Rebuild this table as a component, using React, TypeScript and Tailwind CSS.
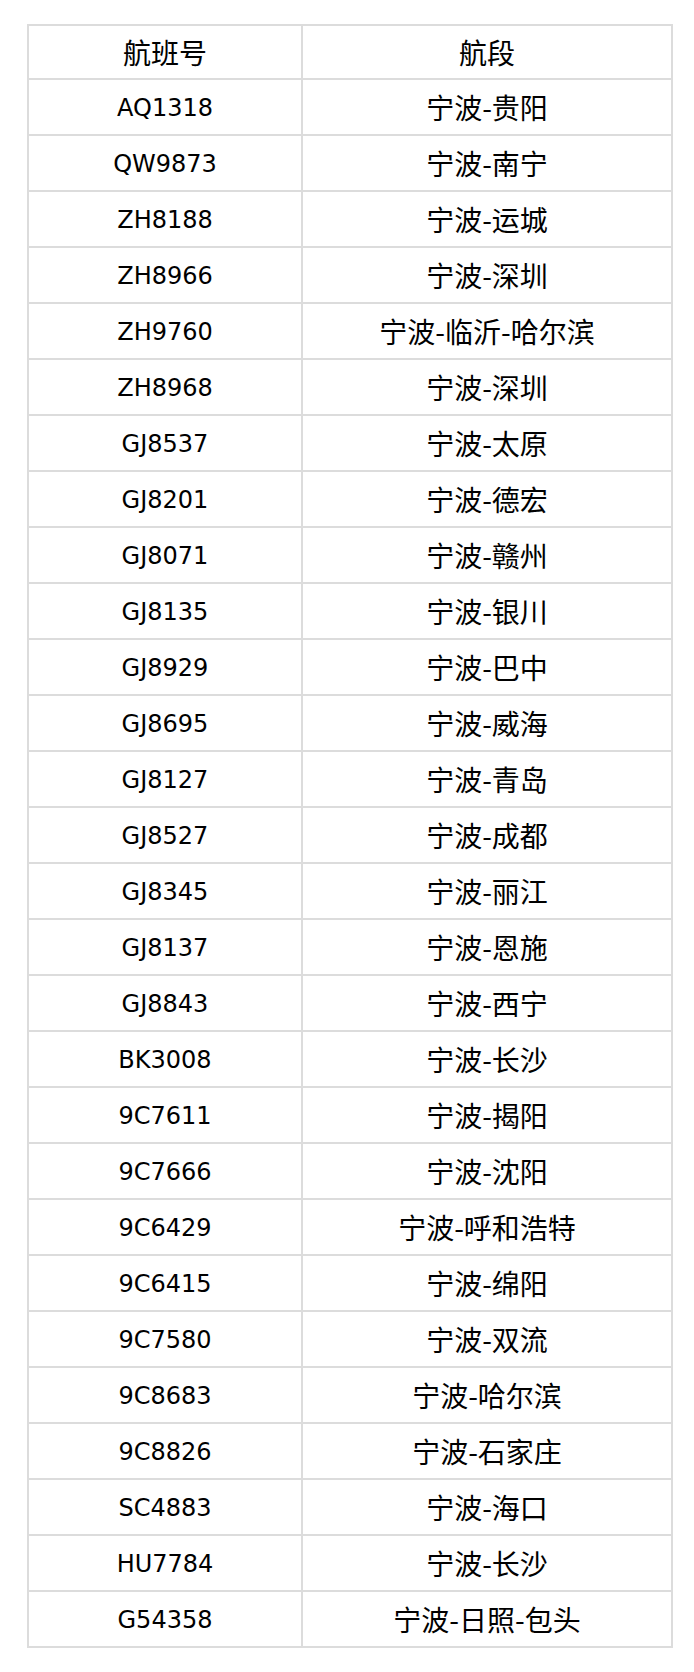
const flights: [string, string][] = [
  ["AQ1318", "宁波-贵阳"],
  ["QW9873", "宁波-南宁"],
  ["ZH8188", "宁波-运城"],
  ["ZH8966", "宁波-深圳"],
  ["ZH9760", "宁波-临沂-哈尔滨"],
  ["ZH8968", "宁波-深圳"],
  ["GJ8537", "宁波-太原"],
  ["GJ8201", "宁波-德宏"],
  ["GJ8071", "宁波-赣州"],
  ["GJ8135", "宁波-银川"],
  ["GJ8929", "宁波-巴中"],
  ["GJ8695", "宁波-威海"],
  ["GJ8127", "宁波-青岛"],
  ["GJ8527", "宁波-成都"],
  ["GJ8345", "宁波-丽江"],
  ["GJ8137", "宁波-恩施"],
  ["GJ8843", "宁波-西宁"],
  ["BK3008", "宁波-长沙"],
  ["9C7611", "宁波-揭阳"],
  ["9C7666", "宁波-沈阳"],
  ["9C6429", "宁波-呼和浩特"],
  ["9C6415", "宁波-绵阳"],
  ["9C7580", "宁波-双流"],
  ["9C8683", "宁波-哈尔滨"],
  ["9C8826", "宁波-石家庄"],
  ["SC4883", "宁波-海口"],
  ["HU7784", "宁波-长沙"],
  ["G54358", "宁波-日照-包头"],
];

const cjk = "font-['Noto_Sans_CJK_SC',sans-serif] text-[28px] leading-none";
const latin = "font-['DejaVu_Sans',sans-serif] text-[24px] leading-none";

export default function App() {
  return (
    <div className="min-h-[1672px] bg-white pt-[24px] pl-[27px] text-black">
      <div className="w-[646px] border-2 border-[#dcdcdc]">
        {/* 表头 */}
        <div className="grid h-[52px] grid-cols-[274px_1fr]">
          <div className={`flex items-center justify-center border-r-2 border-[#dcdcdc] ${cjk}`}>航班号</div>
          <div className={`flex items-center justify-center ${cjk}`}>航段</div>
        </div>
        {flights.map(([no, route]) => (
          <div key={no + route} className="grid h-[56px] grid-cols-[274px_1fr] border-t-2 border-[#dcdcdc]">
            <div className={`flex items-center justify-center border-r-2 border-[#dcdcdc] pt-[1px] ${latin}`}>{no}</div>
            <div className={`flex items-center justify-center ${cjk}`}>{route}</div>
          </div>
        ))}
      </div>
    </div>
  );
}
